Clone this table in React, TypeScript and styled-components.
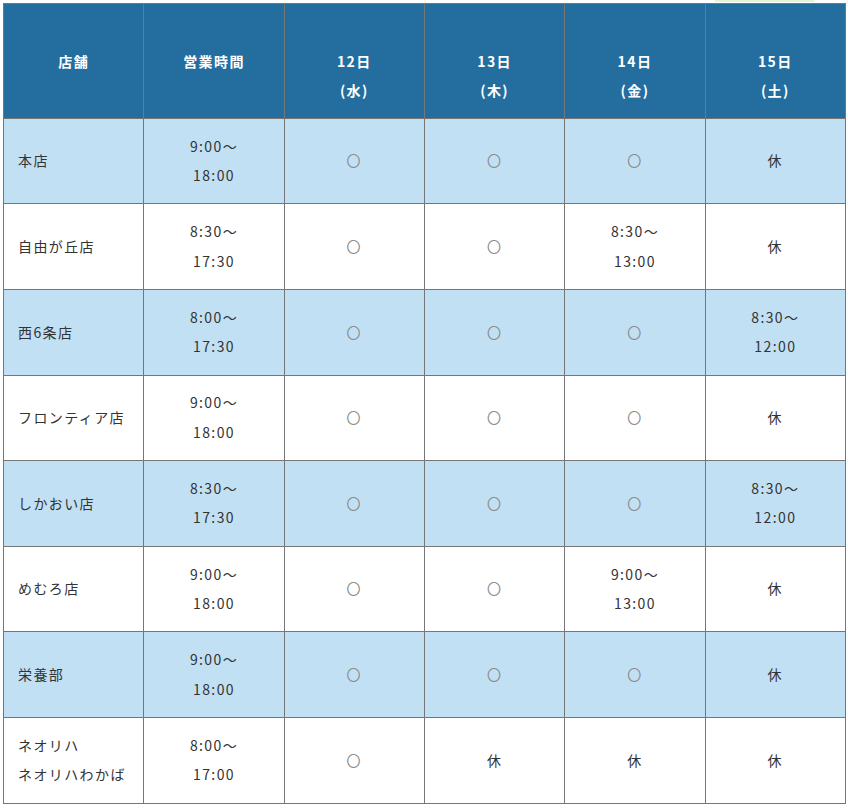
import styled, { createGlobalStyle } from "styled-components";

const GlobalStyle = createGlobalStyle`
  html, body {
    margin: 0;
    padding: 0;
    background: #ffffff;
  }
  body {
    font-family: "Noto Sans CJK JP", "Noto Sans", sans-serif;
    color: #333333;
  }
`;

const Page = styled.div`
  padding: 0 3px;
  width: 843px;
`;

const TopBar = styled.div`
  display: flex;
  justify-content: flex-end;
  height: 3px;
  padding-right: 32px;
`;

const GreenTab = styled.div`
  width: 99px;
  height: 2px;
  background: #e3f6d3;
`;

const ScheduleTable = styled.table`
  width: 843px;
  table-layout: fixed;
  border-collapse: collapse;
  font-size: 14px;
  line-height: 29.4px;
  letter-spacing: 1.4px;
`;

const HeaderCell = styled.th`
  background: #236e9f;
  color: #ffffff;
  font-weight: bold;
  text-align: center;
  vertical-align: top;
  padding: 43px 6px 12px;
  border: 1px solid #767676;
`;

const Row = styled.tr<{ $shaded: boolean }>`
  background: ${({ $shaded }) => ($shaded ? "#c2e0f4" : "#ffffff")};
`;

const Cell = styled.td<{ $left?: boolean }>`
  text-align: ${({ $left }) => ($left ? "left" : "center")};
  vertical-align: middle;
  padding: 12.9px ${({ $left }) => ($left ? "8px 12.9px 14px" : "6px")};
  border: 1px solid #767676;
`;

const Mark = styled.span`
  color: #8a8a8a;
  font-weight: normal;
`;

type Day = string;

interface Store {
  name: string[];
  hours: [string, string];
  days: Day[];
}

const headers = [
  ["店舗"],
  ["営業時間"],
  ["12日", "(水)"],
  ["13日", "(木)"],
  ["14日", "(金)"],
  ["15日", "(土)"],
];

const stores: Store[] = [
  { name: ["本店"], hours: ["9:00〜", "18:00"], days: ["o", "o", "o", "休"] },
  { name: ["自由が丘店"], hours: ["8:30〜", "17:30"], days: ["o", "o", "8:30〜|13:00", "休"] },
  { name: ["西6条店"], hours: ["8:00〜", "17:30"], days: ["o", "o", "o", "8:30〜|12:00"] },
  { name: ["フロンティア店"], hours: ["9:00〜", "18:00"], days: ["o", "o", "o", "休"] },
  { name: ["しかおい店"], hours: ["8:30〜", "17:30"], days: ["o", "o", "o", "8:30〜|12:00"] },
  { name: ["めむろ店"], hours: ["9:00〜", "18:00"], days: ["o", "o", "9:00〜|13:00", "休"] },
  { name: ["栄養部"], hours: ["9:00〜", "18:00"], days: ["o", "o", "o", "休"] },
  { name: ["ネオリハ", "ネオリハわかば"], hours: ["8:00〜", "17:00"], days: ["o", "休", "休", "休"] },
];

const Lines = ({ lines }: { lines: string[] }) => (
  <>
    {lines.map((l, i) => (
      <span key={i}>
        {i > 0 && <br />}
        {l}
      </span>
    ))}
  </>
);

const DayValue = ({ value }: { value: Day }) => {
  if (value === "o") return <Mark>〇</Mark>;
  return <Lines lines={value.split("|")} />;
};

const App = () => {
  return (
    <Page>
      <GlobalStyle />
      <TopBar>
        <GreenTab />
      </TopBar>
      <ScheduleTable>
        <thead>
          <tr>
            {headers.map((h, i) => (
              <HeaderCell key={i}>
                <Lines lines={h} />
              </HeaderCell>
            ))}
          </tr>
        </thead>
        <tbody>
          {stores.map((s, i) => (
            <Row key={i} $shaded={i % 2 === 0}>
              <Cell $left>
                <Lines lines={s.name} />
              </Cell>
              <Cell>
                <Lines lines={s.hours} />
              </Cell>
              {s.days.map((d, j) => (
                <Cell key={j}>
                  <DayValue value={d} />
                </Cell>
              ))}
            </Row>
          ))}
        </tbody>
      </ScheduleTable>
    </Page>
  );
};

export default App;
